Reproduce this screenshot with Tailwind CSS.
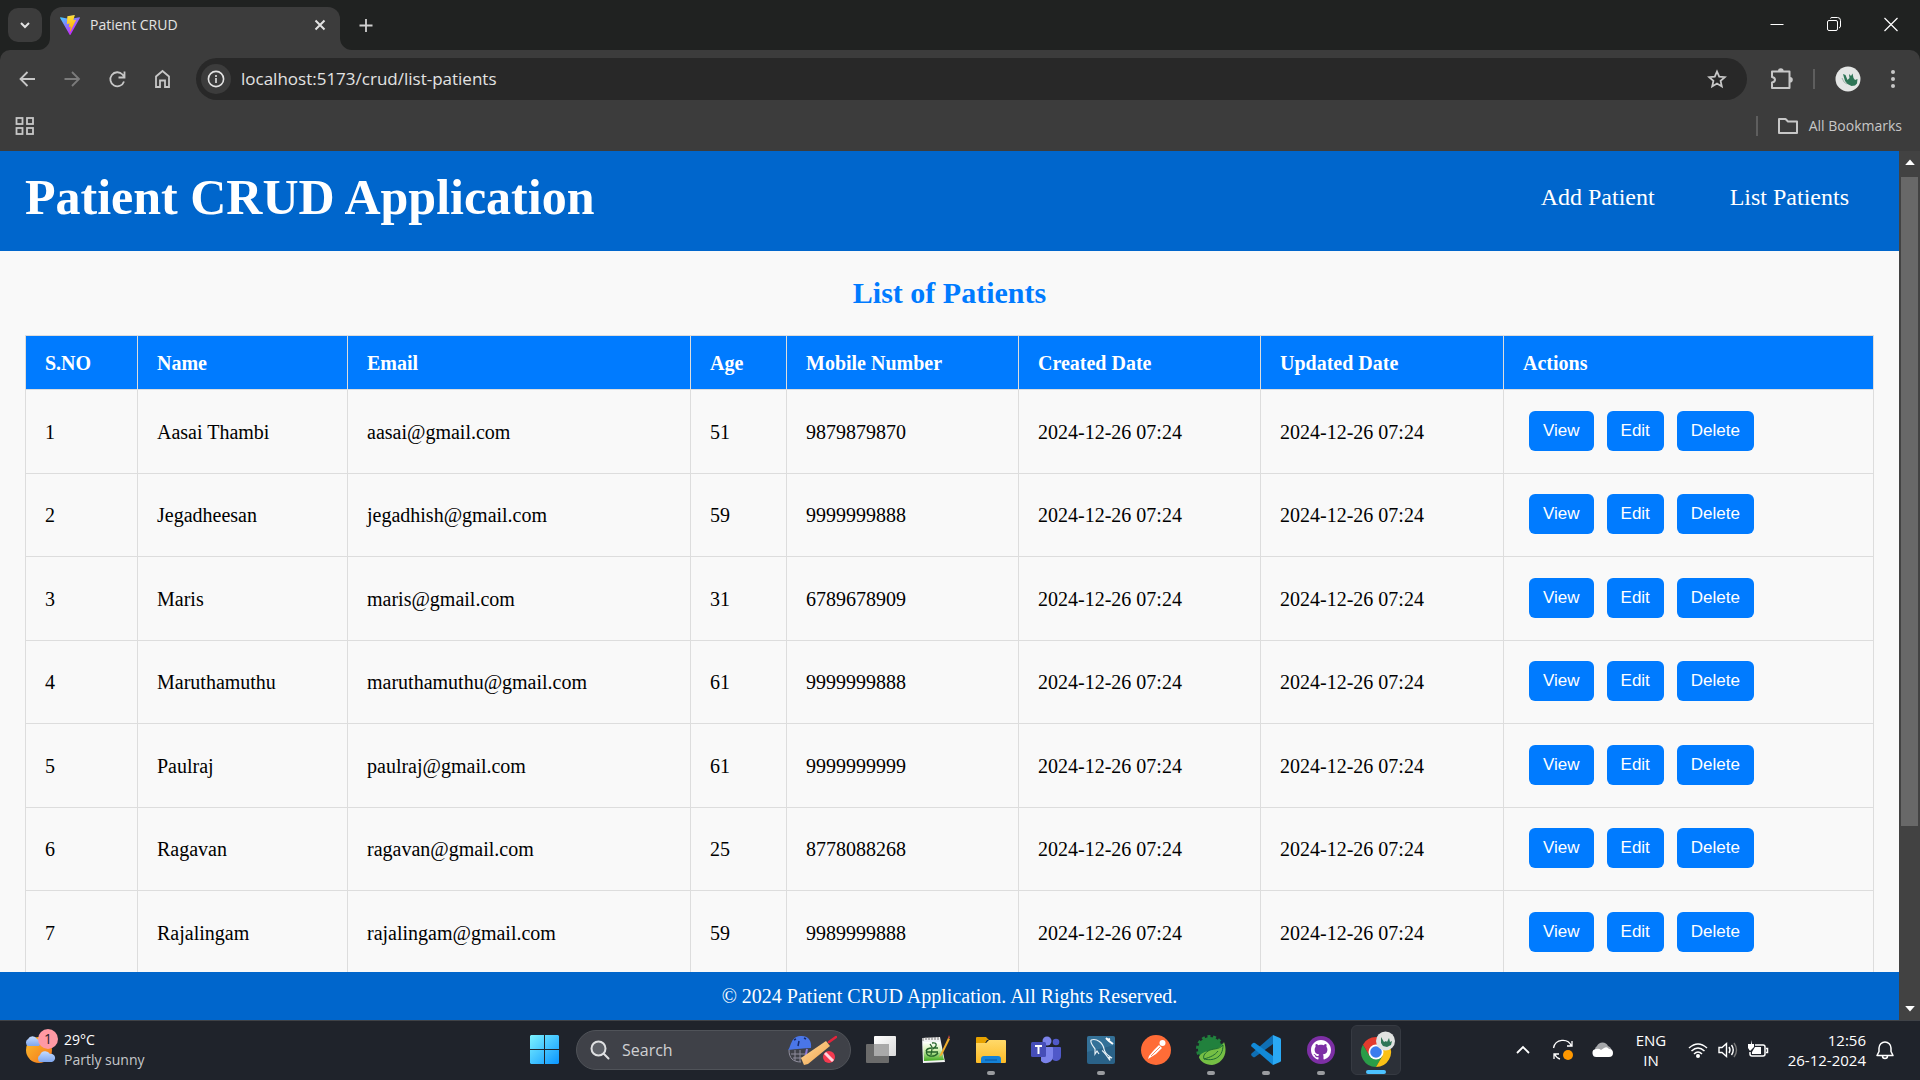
<!DOCTYPE html>
<html lang="en">
<head>
<meta charset="utf-8">
<title>Patient CRUD</title>
<script src="https://cdn.jsdelivr.net/npm/@tailwindcss/browser@4"></script>
</head>
<body class="flex h-screen flex-col overflow-hidden bg-[#202221] font-['Open_Sans',sans-serif] text-[#e3e3e3]">

<!-- Tab strip -->
<div class="flex h-[50px] shrink-0 items-start justify-between bg-[#202221]">
  <div class="flex items-start pl-2">
    <button aria-label="Search tabs" class="mt-2 flex h-[34px] w-[34px] items-center justify-center rounded-[10px] bg-[#3c3c3c]">
      <svg class="h-3 w-3" viewBox="0 0 12 12" fill="none" stroke="#e3e3e3" stroke-width="2"><path d="M2 4l4 4 4-4"/></svg>
    </button>
    <div class="relative ml-2 mt-[7px] flex h-[43px] w-[290px] items-center rounded-t-[12px] bg-[#3c3c3c] pb-[7px] pl-[10px] pr-[12px]">
      <svg class="absolute -left-3 bottom-0 h-3 w-3" viewBox="0 0 12 12"><path d="M12 0v12H0A12 12 0 0 0 12 0z" fill="#3c3c3c"/></svg>
      <svg class="absolute -right-3 bottom-0 h-3 w-3" viewBox="0 0 12 12"><path d="M0 0v12h12A12 12 0 0 1 0 0z" fill="#3c3c3c"/></svg>
      <svg class="h-5 w-5" viewBox="0 0 256 257"><defs><linearGradient id="va" x1="0" x2="0.6" y1="0" y2="0.8"><stop offset="0" stop-color="#41d1ff"/><stop offset="1" stop-color="#bd34fe"/></linearGradient><linearGradient id="vb" x1="0.4" x2="0.5" y1="0" y2="1"><stop offset="0" stop-color="#ffea83"/><stop offset=".1" stop-color="#ffdd35"/><stop offset="1" stop-color="#ffa800"/></linearGradient></defs><path fill="url(#va)" d="M255.2 37.9 134.9 252.9c-2.5 4.4-8.8 4.5-11.4 0L.9 37.9c-2.7-4.8 1.4-10.6 6.8-9.6l120.4 21.5c.8.1 1.6.1 2.3 0l117.9-21.5c5.4-1 9.6 4.8 6.9 9.6z"/><path fill="url(#vb)" d="M185.4.1 96.4 17.5c-1.5.3-2.6 1.5-2.6 3l-5.5 92.5c-.1 2.2 1.9 3.9 4 3.4l24.8-5.7c2.3-.5 4.4 1.5 3.9 3.8l-7.4 36.1c-.5 2.4 1.8 4.5 4.2 3.8l15.3-4.7c2.4-.7 4.7 1.4 4.2 3.8l-11.7 56.6c-.7 3.5 4 5.5 5.9 2.5l1.3-2 72.6-144.8c1.2-2.4-.9-5.2-3.5-4.7l-25.5 4.9c-2.4.5-4.4-1.8-3.8-4.1L189.2 4.2c.7-2.3-1.4-4.6-3.8-4.1z"/></svg>
      <span class="ml-[10px] flex-1 text-sm">Patient CRUD</span>
      <button aria-label="Close tab"><svg class="h-4 w-4" viewBox="0 0 16 16" stroke="#e3e3e3" stroke-width="2"><path d="M3.500 3.500l9 9M12.500 3.500l-9 9"/></svg></button>
    </div>
    <button aria-label="New tab" class="ml-[18px] mt-[17px]"><svg class="h-4 w-4" viewBox="0 0 16 16" stroke="#d0d0d0" stroke-width="1.800"><path d="M8 2v13M1.500 8.500h13"/></svg></button>
  </div>
  <div class="flex h-12 items-center">
    <button aria-label="Minimize" class="flex w-[57px] justify-center"><svg class="h-4 w-4" viewBox="0 0 16 16" stroke="#fff"><path d="M1.500 8.500h13"/></svg></button>
    <button aria-label="Restore" class="flex w-[57px] justify-center"><svg class="h-4 w-4" viewBox="0 0 16 16" fill="none" stroke="#fff"><rect x="1.500" y="4.500" width="10" height="10" rx="1.500"/><path d="M4.500 2.500Q4.500 1.500 6 1.500h5.500a3 3 0 0 1 3 3V10q0 1.500-1.500 2"/></svg></button>
    <button aria-label="Close" class="flex w-[58px] justify-center"><svg class="h-4 w-4" viewBox="0 0 16 16" stroke="#fff" stroke-width="1.200"><path d="M1.500 2l13 13M14.500 2l-13 13"/></svg></button>
  </div>
</div>

<!-- Toolbar -->
<div class="shrink-0 rounded-t-[10px] bg-[#3c3c3c]">
  <div class="flex h-[58px] items-center px-[15px]">
    <button aria-label="Back" class="mr-[21px]"><svg class="h-6 w-6" viewBox="0 0 24 24" fill="none" stroke="#c7c7c7" stroke-width="1.800"><path d="M20 12H5M12.500 5l-7 7 7 7"/></svg></button>
    <button aria-label="Forward" class="mr-[21px]"><svg class="h-6 w-6" viewBox="0 0 24 24" fill="none" stroke="#7b7b7b" stroke-width="1.800"><path d="M4.500 12h15M12 5l7 7-7 7"/></svg></button>
    <button aria-label="Reload" class="mr-[21px]"><svg class="h-6 w-6" viewBox="0 0 24 24" fill="none" stroke="#c7c7c7" stroke-width="1.800"><path d="M19 14.500A7 7 0 1 1 17.500 7.500L19 9.500M19.500 4.500v6h-6"/></svg></button>
    <button aria-label="Home" class="mr-[22px]"><svg class="h-6 w-6" viewBox="0 0 24 24" fill="none" stroke="#c7c7c7" stroke-width="1.800"><path d="M6 20V9.500L12.500 4 19 9.500V20h-4v-6.500h-5V20z"/></svg></button>
    <div class="flex h-[42px] flex-1 items-center rounded-full bg-[#282828] pl-[5px] pr-[20px]">
      <span class="flex h-[30px] w-[30px] items-center justify-center rounded-full bg-[#3c3c3c]"><svg class="h-[18px] w-[18px]" viewBox="0 0 18 18" fill="none" stroke="#e3e3e3" stroke-width="1.600"><circle cx="9" cy="9" r="7.600"/><path d="M9 8v5M9 5v2"/></svg></span>
      <input aria-label="Address" value="localhost:5173/crud/list-patients" class="ml-[10px] min-w-0 flex-1 bg-transparent text-[17px] text-[#e3e3e3] outline-none">
      <button aria-label="Bookmark this page"><svg class="h-5 w-5" viewBox="0 0 20 20" fill="none" stroke="#c7c7c7" stroke-width="1.800"><path d="M10 2.500l2.200 5.200 5.600.500-4.200 3.700 1.200 5.500L10 14.500l-4.800 2.900 1.200-5.500L2.200 8.200l5.600-.500z"/></svg></button>
    </div>
    <button aria-label="Extensions" class="ml-[22px]"><svg class="h-6 w-6" viewBox="0 0 24 24" fill="none" stroke="#c7c7c7" stroke-width="2"><path d="M3 4.500h17.500V21H3v-5.500q3-.500 3-2.700T3 10z" stroke-linejoin="round"/><path d="M9 4a2.800 2.800 0 0 1 5.600 0zM21 10a2.800 2.800 0 0 1 0 5.600z" fill="#c7c7c7" stroke="none"/></svg></button>
    <span class="ml-5 h-5 w-0.5 bg-[#5e5e5e]"></span>
    <button aria-label="Profile" class="ml-5"><svg class="h-[26px] w-[26px]" viewBox="0 0 26 26"><circle cx="13" cy="13" r="12.500" fill="#e4e6e5"/><path d="M8 8l2.500 1 2 5 2-2-.500-4 2 2 1.500-2.500 1 4.500 1.500 2 2.500-1-.500 4.500-2 2-3.500.500-4-2-2.500-3z" fill="#2e7556"/><path d="M7 12l2 4 3 2" fill="none" stroke="#9fb3a9"/></svg></button>
    <button aria-label="Menu" class="ml-5"><svg class="h-6 w-6" viewBox="0 0 24 24" fill="#c7c7c7"><circle cx="12" cy="5" r="2"/><circle cx="12" cy="12" r="2"/><circle cx="12" cy="19" r="2"/></svg></button>
  </div>
  <div class="flex h-[43px] items-center justify-between pb-2 pl-[15px] pr-[18px]">
    <button aria-label="Apps"><svg class="h-5 w-5" viewBox="0 0 20 20" fill="none" stroke="#c7c7c7" stroke-width="1.800"><rect x="1.500" y="2" width="6" height="6"/><rect x="12" y="2" width="6" height="6"/><rect x="1.500" y="12" width="6" height="6"/><rect x="12" y="12" width="6" height="6"/></svg></button>
    <div class="flex items-center">
      <span class="h-5 w-0.5 bg-[#5e5e5e]"></span>
      <button class="ml-[19px] flex items-center gap-[10px] text-sm text-[#c7c7c7]"><svg class="h-[22px] w-[22px]" viewBox="0 0 22 22" fill="none" stroke="#c7c7c7" stroke-width="2" stroke-linejoin="round"><path d="M2 4h6.500l2.500 2.500h9V18H2z"/></svg>All Bookmarks</button>
    </div>
  </div>
</div>

<!-- Web page -->
<div class="flex min-h-0 flex-1 bg-[#f9f9f9] font-['Liberation_Serif',serif] text-xl text-black">
  <div class="flex min-w-0 flex-1 flex-col">
    <header class="flex h-[100px] shrink-0 items-center justify-between bg-[#0066cc] pb-2 pl-[25px] pr-[50px] text-white">
      <h1 class="text-[50px] leading-[58px] font-bold">Patient CRUD Application</h1>
      <nav class="flex gap-[75px] text-2xl"><a href="#">Add Patient</a><a href="#">List Patients</a></nav>
    </header>
    <main class="min-h-0 flex-1 overflow-hidden p-[25px]">
      <h2 class="mb-[25px] text-center text-3xl leading-[34px] font-bold text-[#007bff]">List of Patients</h2>
      <table class="w-full table-fixed border-collapse text-left">
        <colgroup><col class="w-[112px]"><col class="w-[210px]"><col class="w-[343px]"><col class="w-[96px]"><col class="w-[232px]"><col class="w-[242px]"><col class="w-[243px]"><col></colgroup>
        <thead>
          <tr class="h-[54px] bg-[#007bff] text-white">
            <th class="border border-[#ddd] px-[19px]">S.NO</th>
            <th class="border border-[#ddd] px-[19px]">Name</th>
            <th class="border border-[#ddd] px-[19px]">Email</th>
            <th class="border border-[#ddd] px-[19px]">Age</th>
            <th class="border border-[#ddd] px-[19px]">Mobile Number</th>
            <th class="border border-[#ddd] px-[19px]">Created Date</th>
            <th class="border border-[#ddd] px-[19px]">Updated Date</th>
            <th class="border border-[#ddd] px-[19px]">Actions</th>
          </tr>
        </thead>
        <tbody id="patients"></tbody>
      </table>
    </main>
    <footer class="flex h-12 shrink-0 items-center justify-center bg-[#0066cc] text-white">© 2024 Patient CRUD Application. All Rights Reserved.</footer>
  </div>
  <div class="flex w-[21px] shrink-0 flex-col items-center bg-[#424242]">
    <svg class="h-[26px] w-[10px] shrink-0" viewBox="0 0 10 26" fill="#fff"><path d="M5 8.500l4.800 5.500H.2z"/></svg>
    <div class="h-[649px] w-[17px] bg-[#686868]"></div>
    <svg class="mt-auto h-[24px] w-[10px] shrink-0" viewBox="0 0 10 24" fill="#fff"><path d="M5 15.500l4.800-5.500H.2z"/></svg>
  </div>
</div>

<!-- Taskbar -->
<div class="grid h-[60px] shrink-0 grid-cols-[530px_1fr_auto] items-center border-t border-[#3f4247] bg-[#1f232b] pb-[2px] text-[15px] leading-5 text-white">
  <button class="flex items-center pl-[24px] text-left">
    <svg class="mb-1 h-10 w-[34px]" viewBox="0 0 34 40"><defs><linearGradient id="sun" x1="0" y1="0" x2="1" y2="1"><stop offset="0" stop-color="#fbc02d"/><stop offset="1" stop-color="#f4731c"/></linearGradient><linearGradient id="cld" x1="0" y1="0" x2="0" y2="1"><stop offset="0" stop-color="#c4dcff"/><stop offset="1" stop-color="#7fa6ee"/></linearGradient></defs><circle cx="15" cy="22" r="13" fill="url(#sun)"/><path d="M4 18a4 4 0 0 1 0-7 5 5 0 0 1 9 0 4 4 0 0 1 2 7z" fill="url(#cld)"/><path d="M16 34a4 4 0 0 1 0-7 5.500 5.500 0 0 1 10-1 4 4 0 0 1 2 8z" fill="url(#cld)"/><circle cx="24" cy="11" r="10" fill="#ff99a4"/><text x="24" y="16" text-anchor="middle" font-size="14" fill="#1f232b">1</text></svg>
    <span class="ml-[6px] flex flex-col text-sm leading-5"><span>29°C</span><span class="text-[#c5c7ca]">Partly sunny</span></span>
  </button>
  <div class="flex items-center">
    <button aria-label="Start"><svg class="h-[29px] w-[29px]" viewBox="0 0 29 29"><defs><linearGradient id="win" x1="0" y1="0" x2="29" y2="29" gradientUnits="userSpaceOnUse"><stop offset="0" stop-color="#7df3ff"/><stop offset="1" stop-color="#0a95ff"/></linearGradient></defs><path fill="url(#win)" d="M1 0h13v14H0V1zM15 0h13l1 1v13H15zM0 15h14v14H1l-1-1zM15 15h14v13l-1 1H15z"/></svg></button>
    <label class="ml-[17px] flex h-10 w-[275px] shrink-0 items-center rounded-full border border-[#505359] bg-[#3f4148] pl-[13px] pr-[13px]">
      <svg class="h-5 w-5 shrink-0" viewBox="0 0 20 20" fill="#5d6067" stroke="#dfe0e2" stroke-width="2" stroke-linecap="round"><circle cx="8.500" cy="8.500" r="7"/><path d="M13.800 13.800l4.700 4.700"/></svg>
      <input placeholder="Search" class="ml-3 w-0 min-w-0 flex-1 bg-transparent text-base outline-none placeholder:text-[#cfd0d3]">
      <svg class="h-[30px] w-[50px] shrink-0" viewBox="0 0 50 30"><defs><linearGradient id="bat" x1="0" y1="0" x2="1" y2="1"><stop offset="0" stop-color="#ffdc9c"/><stop offset="1" stop-color="#f0a04b"/></linearGradient></defs><g fill="none" stroke="#8f8d9c" stroke-width="1"><path d="M2 15c0 8 4 12 12 12M4 19h14M6 23h10M8 15v11M13 15v12"/></g><path d="M1 15C4 13 3 2 13 1c9-1 12 6 11 12-7 0-14 1-23 2z" fill="#4a76e8"/><path d="M12 6l-1 5M7 5l2-1M17 3l2 1" stroke="#162a6b" stroke-width="1.500"/><path d="M20 14l-2 10" stroke="#8a7ad6" stroke-width="2"/><path d="M42 7l7-5" stroke="#e3243b" stroke-width="2.500" stroke-linecap="round"/><path d="M14 23L39 6l4 5-22 18-4 1z" fill="url(#bat)"/><circle cx="42" cy="22" r="6" fill="#f5394f"/><path d="M38 18l8 8" stroke="#ffd5de" stroke-width="3"/></svg>
    </label>
    <div class="ml-[2px] flex">
      <button aria-label="Task view" class="relative flex h-[50px] w-[55px] items-center justify-center"><svg class="h-[30px] w-[30px]" viewBox="0 0 30 30"><defs><linearGradient id="tv" x1="0" y1="0" x2="1" y2="1"><stop offset="0" stop-color="#fff"/><stop offset="1" stop-color="#d9d9d9"/></linearGradient></defs><rect x="8" y="1" width="22" height="20" rx="1" fill="url(#tv)"/><rect x="0" y="9" width="23" height="19" rx="1" fill="#6b6b6b"/><rect x="8" y="9" width="15" height="12" fill="#a9a9a9"/></svg></button>
      <button aria-label="Notepad++" class="relative flex h-[50px] w-[55px] items-center justify-center"><svg class="h-[30px] w-[30px]" viewBox="0 0 30 30"><defs><linearGradient id="np" x1="0" y1="0" x2="0" y2="1"><stop offset="0" stop-color="#fff"/><stop offset=".4" stop-color="#d9f2b8"/><stop offset="1" stop-color="#3fa81d"/></linearGradient></defs><path d="M1 3l18-1 5 25-22 1z" fill="#f3f3f3"/><path d="M2 7h17l4 18-20 1z" fill="url(#np)"/><path d="M2 3v3M5 2v3M8 2v3M11 2v3M14 2v3M17 2v3" stroke="#777"/><path d="M5 16q1-3 6-3h6M6 14q-2 6 3 7 5 1 8-3M5 17h12M11 8q5-1 4 3l-3 3M9 9l2 3M11 14l-1 6" fill="none" stroke="#25632a" stroke-width="1.300"/><path d="M19 20L27 3l2 1-8 16-3 2z" fill="#f0ac2b"/><path d="M27 3l1-3 1 3z" fill="#d3473d"/></svg></button>
      <button aria-label="File Explorer" class="relative flex h-[50px] w-[55px] items-center justify-center"><svg class="h-[30px] w-[30px]" viewBox="0 0 30 30"><defs><linearGradient id="fe" x1="0" y1="0" x2="0" y2="1"><stop offset="0" stop-color="#ffd96a"/><stop offset="1" stop-color="#fdbb25"/></linearGradient></defs><path d="M0 3q0-1 1-1h9l3 3h-2l-3 5H0z" fill="#e7a200"/><path d="M0 8h10l3-3h16q1 0 1 1v21q0 1-1 1H1q-1 0-1-1z" fill="url(#fe)"/><path d="M5 28v-4q0-3 3-3h14q3 0 3 3v4z" fill="#1482d8"/><path d="M9 25h12" stroke="#0b559c"/></svg><span class="absolute bottom-0 h-1 w-2 rounded-full bg-[#9a9ca0]"></span></button>
      <button aria-label="Teams" class="relative flex h-[50px] w-[55px] items-center justify-center"><svg class="h-[30px] w-[30px]" viewBox="0 0 30 30"><circle cx="25" cy="7" r="3.300" fill="#5059c9"/><path d="M20 12h9q1 0 1 1v8a5 5 0 0 1-9 3z" fill="#5059c9"/><circle cx="16" cy="6" r="4.500" fill="#7b83eb"/><path d="M10 12h11q1 0 1 1v8a7 7 0 0 1-12 5z" fill="#7b83eb"/><rect x="0" y="7" width="15" height="15" rx="1.500" fill="#464eb8"/><path d="M4 11h7M7.500 11v8" stroke="#fff" stroke-width="2"/></svg></button>
      <button aria-label="MySQL Workbench" class="relative flex h-[50px] w-[55px] items-center justify-center"><svg class="h-[30px] w-[30px]" viewBox="0 0 30 30"><rect x="1" y="1" width="28" height="28" rx="2" fill="#2a6288"/><path d="M1 3q0-2 2-2h24q2 0 2 2v7L1 17z" fill="#3e7fa8" opacity=".5"/><path d="M5 5c6-2 12 3 13 9 1 5 4 6 8 9l-3-.500 1 3c-3-4-6-9-8-10M5 5c-1 3 2 6 4 9v5l2-3 2 3" fill="none" stroke="#e8f1f6" stroke-width="1.200"/><path d="M20 3l3 3 4 3M21 5l3-1" stroke="#fff" stroke-width="2" fill="none"/></svg><span class="absolute bottom-0 h-1 w-2 rounded-full bg-[#9a9ca0]"></span></button>
      <button aria-label="Postman" class="relative flex h-[50px] w-[55px] items-center justify-center"><svg class="h-[30px] w-[30px]" viewBox="0 0 30 30"><circle cx="15" cy="15" r="15" fill="#ff6c37"/><circle cx="21.500" cy="8" r="3" fill="#fff"/><path d="M18 10l3 3-6 6-8 5 1-3 5-6z" fill="#fff"/><path d="M19 12l-9 9M20 16l2-3" stroke="#ff6c37" stroke-width=".8"/></svg></button>
      <button aria-label="Spring Tools" class="relative flex h-[50px] w-[55px] items-center justify-center"><svg class="h-[30px] w-[30px]" viewBox="0 0 30 30"><circle cx="14" cy="14" r="12" fill="#21813d"/><circle cx="14" cy="14" r="12.500" fill="none" stroke="#21813d" stroke-width="3" stroke-dasharray="3 2.600"/><path d="M28 7c5 13-3 22-12 23C9 30 4 26 3 22c4-9 20-4 25-15z" fill="#75bf44"/><path d="M27 10c-4 5-10 3-15 6-4 3-5 5-4 8 8 2 19 0 19-14z" fill="#75bf44" stroke="#1d6b33"/><path d="M8 24c7-2 11-4 14-8" fill="none" stroke="#1d6b33"/></svg><span class="absolute bottom-0 h-1 w-2 rounded-full bg-[#9a9ca0]"></span></button>
      <button aria-label="Visual Studio Code" class="relative flex h-[50px] w-[55px] items-center justify-center"><svg class="h-[30px] w-[30px]" viewBox="0 0 30 30"><path d="M22 0v9L4 22q-1 .700-2 0l-1.500-1.500q-.700-1 0-2z" fill="#0f6fb5"/><path d="M22 30v-9L4 8Q3 7.300 2 8L.5 9.500q-.700 1 0 2z" fill="#128ad8"/><path d="M22 0l7 3q1 .500 1 1.500v21q0 1-1 1.500l-7 3z" fill="#2aa9f5"/></svg><span class="absolute bottom-0 h-1 w-2 rounded-full bg-[#9a9ca0]"></span></button>
      <button aria-label="GitHub Desktop" class="relative flex h-[50px] w-[55px] items-center justify-center"><svg class="h-[28px] w-[28px]" viewBox="0 0 28 28"><circle cx="14" cy="14" r="14" fill="#7d2fa5"/><path transform="translate(4 4) scale(1.250)" fill="#fff" d="M8 0C3.580 0 0 3.580 0 8c0 3.540 2.290 6.530 5.470 7.590.4.070.55-.17.55-.38 0-.19-.01-.82-.01-1.490-2.010.37-2.530-.49-2.690-.94-.09-.23-.48-.94-.82-1.130-.28-.15-.68-.52-.01-.53.63-.01 1.080.58 1.230.82.72 1.210 1.870.87 2.330.66.07-.52.28-.87.51-1.070-1.780-.2-3.640-.89-3.640-3.950 0-.87.31-1.590.82-2.150-.08-.2-.36-1.020.08-2.120 0 0 .67-.21 2.200.82.64-.18 1.320-.27 2-.27s1.360.09 2 .27c1.530-1.040 2.200-.82 2.200-.82.44 1.100.16 1.920.08 2.120.51.56.82 1.270.82 2.150 0 3.070-1.870 3.750-3.650 3.950.29.25.54.73.54 1.480 0 1.070-.01 1.930-.01 2.200 0 .21.15.46.55.38A8 8 0 0 0 16 8c0-4.420-3.580-8-8-8z"/></svg><span class="absolute bottom-0 h-1 w-2 rounded-full bg-[#9a9ca0]"></span></button>
      <button aria-label="Google Chrome" class="relative ml-[3px] flex h-[50px] w-[50px] items-center justify-center rounded-md border border-[#363a42] bg-[#2c3038]"><svg class="h-[38px] w-[38px]" viewBox="0 0 38 38"><path d="M6 13.500A15 15 0 0 0 19 36l6.500-11.250L19 21l-6.500 3.750z" fill="#2a9d48"/><path d="M32 13.500A15 15 0 0 1 19 36l6.500-11.250L19 21v-7.500z" fill="#fbc116"/><path d="M6 13.500a15 15 0 0 1 26 0H19V21l-6.500 3.750z" fill="#e33b2e"/><circle cx="19" cy="21" r="7.500" fill="#fff"/><circle cx="19" cy="21" r="5.800" fill="#3b7ded"/><circle cx="28.500" cy="10" r="9.500" fill="#e0e2e1"/><path d="M24 6l3 5 2-1 1 1 2-4 1 4 2-1-1 4-4 2-4-1-2-3z" fill="#2e7556"/></svg><span class="absolute bottom-0 h-1 w-5 rounded-full bg-[#4cc2ff]"></span></button>
    </div>
  </div>
  <div class="flex items-center pr-[26px]">
    <button aria-label="Show hidden icons"><svg class="h-4 w-4" viewBox="0 0 16 16" fill="none" stroke="#fff" stroke-width="1.800"><path d="M2 11l6-6 6 6"/></svg></button>
    <svg class="ml-[21px] h-[22px] w-[22px]" viewBox="0 0 22 22" fill="none" stroke="#fff" stroke-width="1.300"><path d="M1.500 9A9.500 9.500 0 0 1 19.500 7M20 2v5h-5M8 20c-2-.500-4-2-5.500-5M2 20v-5h5"/><circle cx="16" cy="16" r="5" fill="#ff9800" stroke="none"/></svg>
    <svg class="ml-[18px] h-5 w-[22px]" viewBox="0 0 22 20"><path d="M5 13a4 4 0 0 1 0-7 6 6 0 0 1 11 0q3 1 4 5z" fill="#a5a7aa"/><path d="M5 17a4 4 0 0 1-1-8q3-1 5 1l3-2q3-2 5 1a4 4 0 0 1 0 8z" fill="#fff"/></svg>
    <span class="ml-[19px] w-[36px] text-center">ENG<br>IN</span>
    <svg class="ml-[19px] h-5 w-5" viewBox="0 0 20 20" fill="none" stroke="#fff" stroke-width="1.500"><path d="M1 8q9-8 18 0M3.500 11q6.500-6 13 0M6 14q4-4 8 0"/><circle cx="10" cy="16" r="2" fill="#fff" stroke="none"/></svg>
    <svg class="ml-[10px] h-5 w-5" viewBox="0 0 20 20" fill="none" stroke="#fff" stroke-width="1.400"><path d="M1 7.500h3l4.500-4v13L4 12.500H1zM11 7q2 3 0 6M13.500 5q3.500 5 0 10"/><path d="M16 3q5 7 0 14" stroke="#777"/></svg>
    <svg class="ml-[9px] h-5 w-[22px]" viewBox="0 0 22 20" fill="none" stroke="#fff" stroke-width="1.500"><path d="M8 5h8q2 0 2 2v7q0 2-2 2H5q-2 0-2-2v-2M19 8.500h1.500v4H19"/><path d="M8 7h6v7H5v-2z" fill="#fff" stroke="none"/><path d="M4 0v4H1v4l2 3 4-4V4H5z" fill="#fff" stroke="none"/></svg>
    <span class="ml-[13px] w-[84px] text-right whitespace-nowrap">12:56<br>26-12-2024</span>
    <button aria-label="Notifications" class="ml-[10px]"><svg class="h-5 w-[18px]" viewBox="0 0 18 20" fill="none" stroke="#fff" stroke-width="1.500"><path d="M1 15.500l2-4V8a6 6 0 0 1 12 0v3.500l2 4zM6.500 16a2.500 2.500 0 0 0 5 0" stroke-linejoin="round"/></svg></button>
  </div>
</div>

<script>
const patients = [
  ["Aasai Thambi", "aasai@gmail.com", 51, "9879879870"],
  ["Jegadheesan", "jegadhish@gmail.com", 59, "9999999888"],
  ["Maris", "maris@gmail.com", 31, "6789678909"],
  ["Maruthamuthu", "maruthamuthu@gmail.com", 61, "9999999888"],
  ["Paulraj", "paulraj@gmail.com", 61, "9999999999"],
  ["Ragavan", "ragavan@gmail.com", 25, "8778088268"],
  ["Rajalingam", "rajalingam@gmail.com", 59, "9989999888"],
];
const cell = v => `<td class="border border-[#ddd] px-[19px]">${v}</td>`;
const button = t => `<button class="h-10 rounded-md bg-[#007bff] px-[14px] text-[17px] text-white">${t}</button>`;
document.getElementById("patients").innerHTML = patients.map((p, i) =>
  `<tr class="h-[84px] even:h-[83px]">${[i + 1, ...p, "2024-12-26 07:24", "2024-12-26 07:24"].map(cell).join("")}
   <td class="border border-[#ddd] px-[25px] pb-[2px]"><div class="flex gap-[13px] font-['Liberation_Sans',sans-serif]">${["View", "Edit", "Delete"].map(button).join("")}</div></td></tr>`).join("");
</script>
</body>
</html>
